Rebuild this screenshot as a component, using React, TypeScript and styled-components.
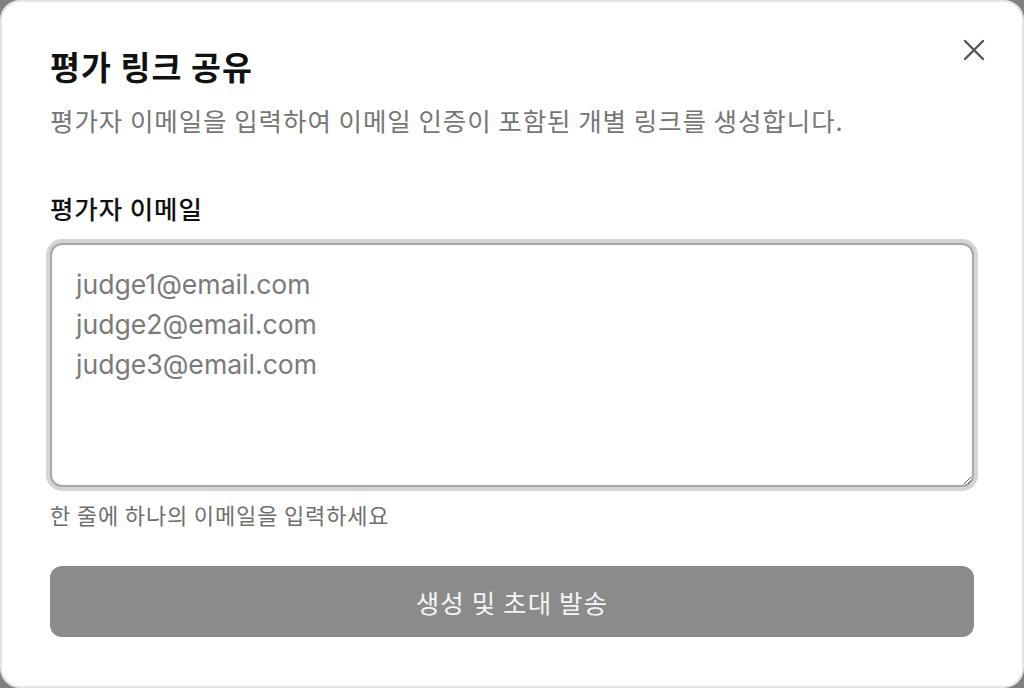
import React from "react";
import styled, { createGlobalStyle } from "styled-components";

const GlobalStyle = createGlobalStyle`
  html, body {
    margin: 0;
    padding: 0;
    background: #808080;
  }
  * { box-sizing: border-box; }
`;

const KR = `"Noto Sans CJK KR", "Noto Sans", sans-serif`;

const Dialog = styled.div`
  position: relative;
  width: 1024px;
  height: 688px;
  background: #ffffff;
  border: 2px solid #e4e4e4;
  border-radius: 20px;
  padding: 44px 48px 48px 48px;
  display: flex;
  flex-direction: column;
  font-family: ${KR};
`;

const CloseButton = styled.button`
  position: absolute;
  top: 30px;
  right: 30px;
  width: 36px;
  height: 36px;
  padding: 0;
  border: none;
  background: transparent;
  display: flex;
  align-items: center;
  justify-content: center;
  color: #555555;
  cursor: pointer;
`;

const Title = styled.h2`
  margin: 0;
  font-size: 32.5px;
  line-height: 40px;
  letter-spacing: 1.1px;
  font-weight: 700;
  color: #111111;
`;

const Description = styled.p`
  margin: 16px 0 0 0;
  font-size: 25.5px;
  line-height: 36px;
  letter-spacing: 0.95px;
  font-weight: 400;
  color: #767676;
`;

const Label = styled.label`
  margin-top: 52px;
  font-size: 25.5px;
  line-height: 36px;
  letter-spacing: 0.9px;
  font-weight: 500;
  color: #111111;
`;

const EmailArea = styled.textarea`
  margin-top: 17px;
  width: 100%;
  height: 244px;
  border: 2px solid #a6a6a6;
  border-radius: 12px;
  box-shadow: 0 0 0 4px #d4d4d4;
  padding: 19px 24px 16px 24px;
  font-family: "Inter", "Liberation Sans", sans-serif;
  font-size: 26.6px;
  line-height: 40px;
  color: #222222;
  outline: none;
  resize: vertical;
  &::placeholder {
    color: #7a7a7a;
  }
`;

const Hint = styled.p`
  margin: 12px 0 0 0;
  font-size: 22px;
  line-height: 30px;
  letter-spacing: 0.85px;
  color: #6e6e6e;
`;

const SubmitButton = styled.button`
  margin-top: 37px;
  width: 100%;
  height: 71px;
  border: none;
  border-radius: 12px;
  background: #8b8b8b;
  color: #f4f4f4;
  font-family: ${KR};
  font-size: 25.5px;
  letter-spacing: 1.1px;
  font-weight: 400;
  display: flex;
  align-items: center;
  justify-content: center;
`;

export default function App() {
  return (
    <>
      <GlobalStyle />
      <Dialog>
        <Title>평가 링크 공유</Title>
        <Description>
          평가자 이메일을 입력하여 이메일 인증이 포함된 개별 링크를 생성합니다.
        </Description>
        <Label htmlFor="emails">평가자 이메일</Label>
        <EmailArea
          id="emails"
          placeholder={"judge1@email.com\njudge2@email.com\njudge3@email.com"}
        />
        <Hint>한 줄에 하나의 이메일을 입력하세요</Hint>
        <SubmitButton disabled>생성 및 초대 발송</SubmitButton>
        <CloseButton aria-label="닫기">
          <svg width="22" height="22" viewBox="0 0 22 22" fill="none">
            <path
              d="M2 2L20 20M20 2L2 20"
              stroke="currentColor"
              strokeWidth="2.4"
              strokeLinecap="round"
            />
          </svg>
        </CloseButton>
      </Dialog>
    </>
  );
}
